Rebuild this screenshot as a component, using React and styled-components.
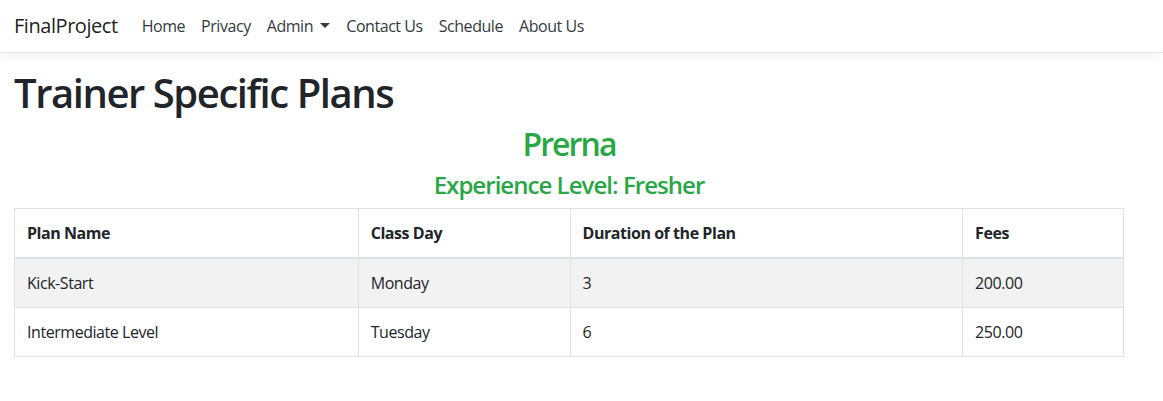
import React from 'react';
import styled, { createGlobalStyle } from 'styled-components';

const GlobalStyle = createGlobalStyle`
  * { box-sizing: border-box; }
  body {
    margin: 0;
    font-family: "Segoe UI", "Open Sans", "Noto Sans", sans-serif;
    font-size: 16px;
    line-height: 1.5;
    letter-spacing: -0.028em;
    color: #212529;
    background: #fff;
  }
`;

const Navbar = styled.nav`
  display: flex;
  align-items: center;
  height: 53px;
  padding: 0 14px;
  border-bottom: 1px solid #e5e5e5;
  box-shadow: 0 4px 12px rgba(0, 0, 0, 0.05);
  margin-bottom: 16px;
`;

const Brand = styled.a`
  font-size: 20px;
  color: rgba(0, 0, 0, 0.9);
  margin-right: 16px;
  text-decoration: none;
`;

const NavList = styled.ul`
  display: flex;
  list-style: none;
  margin: 0;
  padding: 0;
`;

const NavLink = styled.a`
  display: block;
  padding: 8px;
  color: #343a40;
  text-decoration: none;
`;

const Caret = styled.span`
  display: inline-block;
  margin-left: 0.45em;
  vertical-align: 0.255em;
  border-top: 0.32em solid;
  border-left: 0.32em solid transparent;
  border-right: 0.32em solid transparent;
`;

const Main = styled.main`
  padding-left: 14px;
  width: 1124px;
`;

const Title = styled.h1`
  font-size: 40px;
  font-weight: 600;
  line-height: 1.2;
  letter-spacing: -0.036em;
  margin: 0 0 8px;
`;

const Heading = styled.div`
  text-align: center;
  color: #28a745;
  font-weight: 600;
  line-height: 1.2;
  font-size: ${p => p.size}px;
  letter-spacing: ${p => p.spacing}em;
  margin-bottom: 8px;
`;

const Table = styled.table`
  width: 1110px;
  border-collapse: collapse;
  margin-bottom: 16px;
`;

const Th = styled.th`
  text-align: left;
  font-weight: 700;
  padding: 12px;
  border: 1px solid #dee2e6;
  border-bottom-width: 2px;
  width: ${p => p.w}px;
`;

const Row = styled.tr`
  background: ${p => (p.striped ? 'rgba(0, 0, 0, 0.05)' : 'transparent')};
`;

const Td = styled.td`
  padding: 12px;
  border: 1px solid #dee2e6;
`;

const links = ['Home', 'Privacy', 'Admin', 'Contact Us', 'Schedule', 'About Us'];

const plans = [
  { name: 'Kick-Start', day: 'Monday', duration: 3, fees: '200.00' },
  { name: 'Intermediate Level', day: 'Tuesday', duration: 6, fees: '250.00' },
];

const App = () => {
  return (
    <>
      <GlobalStyle />
      <Navbar>
        <Brand href="#">FinalProject</Brand>
        <NavList>
          {links.map(l => (
            <li key={l}>
              <NavLink href="#">
                {l}
                {l === 'Admin' && <Caret />}
              </NavLink>
            </li>
          ))}
        </NavList>
      </Navbar>
      <Main>
        <Title>Trainer Specific Plans</Title>
        <Heading size={32} spacing={-0.06}>Prerna</Heading>
        <Heading size={24} spacing={-0.04}>Experience Level: Fresher</Heading>
        <Table>
          <thead>
            <tr>
              <Th w={344}>Plan Name</Th>
              <Th w={212}>Class Day</Th>
              <Th w={393}>Duration of the Plan</Th>
              <Th w={161}>Fees</Th>
            </tr>
          </thead>
          <tbody>
            {plans.map((p, i) => (
              <Row key={p.name} striped={i % 2 === 0}>
                <Td>{p.name}</Td>
                <Td>{p.day}</Td>
                <Td>{p.duration}</Td>
                <Td>{p.fees}</Td>
              </Row>
            ))}
          </tbody>
        </Table>
      </Main>
    </>
  );
};

export default App;
